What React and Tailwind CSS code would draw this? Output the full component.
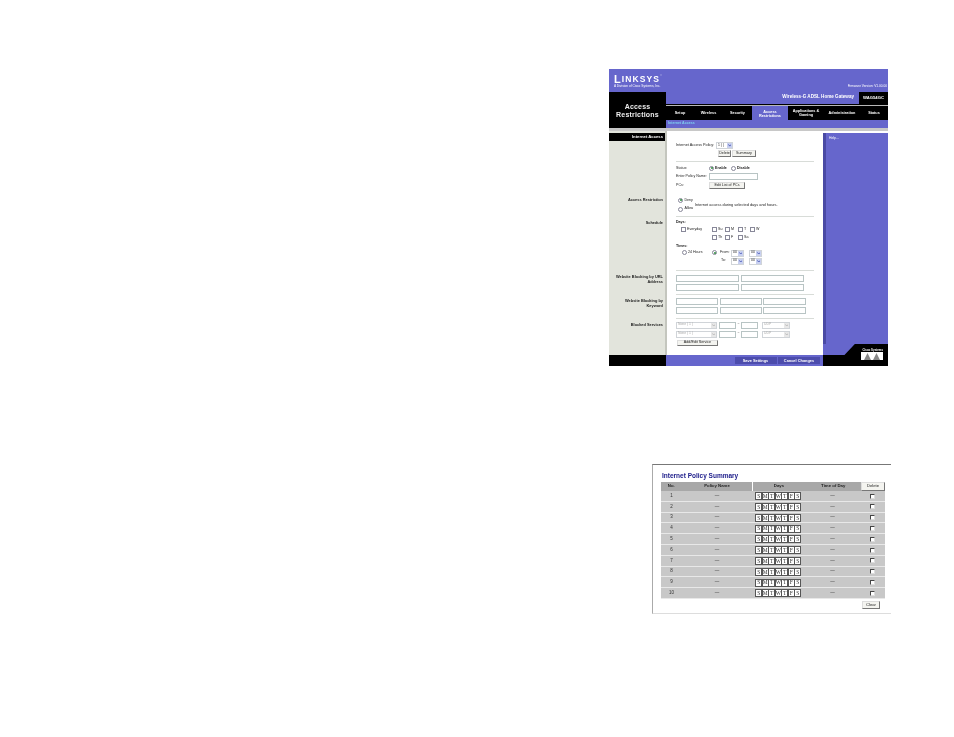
const PURPLE = "bg-[#6666cc]";

function Radio({ on }) {
  return (
    <span className="inline-flex h-[5px] w-[5px] shrink-0 items-center justify-center rounded-full border-[0.5px] border-[#889] bg-white">
      {on && <span className="h-[2px] w-[2px] rounded-full bg-[#2c8a3c]" />}
    </span>
  );
}

function Check({ className = "border-[#889]" }) {
  return <span className={`inline-block h-[5px] w-[5px] shrink-0 border-[0.5px] bg-white ${className}`} />;
}

function Select({ w, value, off }) {
  return (
    <span
      style={{ width: w }}
      className={`flex h-[7px] shrink-0 items-center justify-between border-[0.5px] border-[#d0d4d8] bg-white pl-[1px] text-[3.4px] ${off ? "text-[#aaa]" : "text-[#222]"}`}
    >
      {value}
      <span className={`flex h-full w-[5px] items-center justify-center ${off ? "bg-[#e8e8e8]" : "bg-[#c8d0f0]"}`}>
        <svg viewBox="0 0 6 4" className="h-[2.5px] w-[3.5px]">
          <path d="M0.5 0.5 L3 3.5 L5.5 0.5" fill="none" stroke={off ? "#aaa" : "#2838a8"} strokeWidth="1.2" />
        </svg>
      </span>
    </span>
  );
}

function Input({ w, h = 7 }) {
  return <span style={{ width: w, height: h }} className="block shrink-0 border-[0.5px] border-[#b8c4c4] bg-white" />;
}

function Btn({ w, h = 7, children }) {
  return (
    <span
      style={{ width: w, height: h }}
      className="flex shrink-0 items-center justify-center border-[0.5px] border-b-[#777] border-l-[#ddd] border-r-[#777] border-t-[#ddd] bg-[#f4f4f0] text-[3.7px] text-[#222]"
    >
      {children}
    </span>
  );
}

function Section({ label, black, h, last, children }) {
  return (
    <div style={{ height: h }} className="flex">
      <div className="w-[56px] shrink-0 bg-[#e2e4dc] pt-[2px]">
        {black ? (
          <div className="flex h-[8px] items-center justify-end bg-black pr-[2px] text-[4.2px] font-bold text-white">{label}</div>
        ) : (
          <div className="pr-[2px] pt-[1px] text-right text-[3.9px] font-bold leading-[5.5px] text-[#222]">{label}</div>
        )}
      </div>
      <div className="w-[2px] shrink-0 bg-[#c4c6be]" />
      <div className="w-[156px] shrink-0 bg-white px-[9px]">
        <div className={`h-full ${last ? "" : "border-b-[0.5px] border-[#d8dcd8]"}`}>{children}</div>
      </div>
    </div>
  );
}

function Tab({ w, on, children }) {
  return (
    <div
      style={{ width: w }}
      className={`flex items-center justify-center text-center text-[3.8px] font-bold leading-[4.5px] text-white ${on ? "h-[16px] bg-[#6666cc]" : "h-[14px] bg-black"}`}
    >
      {children}
    </div>
  );
}

function RouterFigure() {
  return (
    <div className="h-[297px] w-[279px] bg-white blur-[0.4px]">
      <div className={`flex h-[23px] ${PURPLE} pl-[5px] text-white`}>
        <div className="pt-[5px]">
          <div className="flex h-[10px] items-end whitespace-nowrap font-bold leading-[9px] tracking-[1.1px]">
            <span className="text-[11px]">L</span>
            <span className="text-[8.5px]">INKSYS</span>
            <span className="mb-[4px] text-[2.5px] font-normal">®</span>
          </div>
          <div className="text-[3.2px] leading-[4px]">A Division of Cisco Systems, Inc.</div>
        </div>
        <div className="ml-auto self-end pb-[3px] pr-[1px] text-[3.2px]">Firmware Version: V1.00.00</div>
      </div>

      <div className="flex h-[36px] bg-black">
        <div className="flex w-[57px] shrink-0 items-center justify-center pt-[2px] text-center text-[7px] font-bold leading-[8.5px] tracking-[0.2px] text-[#eee]">
          Access Restrictions
        </div>
        <div className="w-[222px]">
          <div className={`flex h-[11.5px] items-center justify-end ${PURPLE}`}>
            <span className="pr-[5px] text-[4.6px] font-bold text-white">Wireless-G ADSL Home Gateway</span>
            <span className="flex h-full w-[29px] items-center justify-center bg-black text-[4.2px] font-bold text-white">WAG54GC</span>
          </div>
          <div className="mt-[1.5px] h-[1px] bg-[#b8b8b8]" />
          <div className="flex h-[14px] items-start">
            <Tab w={28}>Setup</Tab>
            <Tab w={29}>Wireless</Tab>
            <Tab w={29}>Security</Tab>
            <Tab w={36} on>Access<br />Restrictions</Tab>
            <Tab w={36}>Applications &amp;<br />Gaming</Tab>
            <Tab w={36}>Administration</Tab>
            <Tab w={28}>Status</Tab>
          </div>
          <div className={`flex h-[8px] items-center ${PURPLE} pl-[2px] text-[3.6px] font-bold text-[#7fd0f0]`}>Internet Access</div>
        </div>
      </div>
      <div className="h-[3px] bg-[#c8c8c8]" />

      <div className="flex h-[235px]">
        <div className="w-[214px] shrink-0">
          <Section label="Internet Access" black h={62.5}>
            <div className="mt-[11px] flex h-[7px] items-center text-[3.8px] text-[#222]">
              <span className="w-[40px] whitespace-nowrap">Internet Access Policy:</span>
              <Select w={17} value="1 ( )" />
            </div>
            <div className="ml-[42px] mt-[1px] flex gap-[1px]">
              <Btn w={13}>Delete</Btn>
              <Btn w={24}>Summary</Btn>
            </div>
            <div className="mt-[4px] border-t-[0.5px] border-[#d8dcd8]" />
            <div className="mt-[3px] flex h-[6px] items-center text-[3.6px] text-[#222]">
              <span className="w-[33px] pt-[1px]">Status:</span>
              <Radio on />
              <span className="ml-[1px] w-[16px] pt-[1px] font-bold">Enable</span>
              <Radio />
              <span className="ml-[1px] pt-[1px] font-bold">Disable</span>
            </div>
            <div className="mt-[2px] flex h-[7px] items-center text-[3.6px] text-[#222]">
              <span className="w-[33px] whitespace-nowrap">Enter Policy Name:</span>
              <Input w={49} />
            </div>
            <div className="mt-[2px] flex h-[7px] items-center text-[3.6px] text-[#222]">
              <span className="w-[33px]">PCs:</span>
              <Btn w={36}>Edit List of PCs</Btn>
            </div>
          </Section>
          <Section label="Access Restriction" h={23}>
            <div className="ml-[2px] pt-[4px] text-[3.6px] text-[#222]">
              <div className="flex h-[5px] items-center gap-[1.5px]"><Radio on /> <span className="pt-[1px]">Deny</span></div>
              <div className="flex h-[4px] items-center whitespace-nowrap pl-[17px] text-[3.9px]">Internet access during selected days and hours.</div>
              <div className="flex h-[5px] items-center gap-[1.5px]"><Radio /> Allow</div>
            </div>
          </Section>
          <Section label="Schedule" h={54}>
            <div className="pt-[3px] text-[3.6px] text-[#222]">
              <div className="h-[5px] font-bold leading-[5px]">Days:</div>
              <div className="mt-[2px] flex h-[7px] items-center">
                <div className="ml-[5px] flex w-[31px] items-center gap-[1px]"><Check /> Everyday</div>
                <div className="flex w-[13px] items-center gap-[1px]"><Check /> Su</div>
                <div className="flex w-[13px] items-center gap-[1px]"><Check /> M</div>
                <div className="flex w-[12px] items-center gap-[1px]"><Check /> T</div>
                <div className="flex items-center gap-[1px]"><Check /> W</div>
              </div>
              <div className="mt-[1px] flex h-[7px] items-center pl-[36px]">
                <div className="flex w-[13px] items-center gap-[1px]"><Check /> Th</div>
                <div className="flex w-[13px] items-center gap-[1px]"><Check /> F</div>
                <div className="flex items-center gap-[1px]"><Check /> Sa</div>
              </div>
              <div className="mt-[2px] h-[5px] font-bold leading-[5px]">Times:</div>
              <div className="mt-[1px] flex h-[7px] items-center">
                <div className="ml-[6px] flex w-[30px] items-center gap-[1px]"><Radio /> 24 Hours</div>
                <div className="flex w-[19px] items-center gap-[3px]"><Radio on /> From:</div>
                <Select w={13} value="00" />
                <span className="w-[5px]" />
                <Select w={13} value="00" />
              </div>
              <div className="mt-[1px] flex h-[7px] items-center pl-[45px]">
                <span className="w-[10px]">To:</span>
                <Select w={13} value="00" />
                <span className="w-[5px]" />
                <Select w={13} value="00" />
              </div>
            </div>
          </Section>
          <Section label={<>Website Blocking by URL<br />Address</>} h={24}>
            <div className="pt-[4px]">
              <div className="flex gap-[2px]"><Input w={63} /><Input w={63} /></div>
              <div className="mt-[2px] flex gap-[2px]"><Input w={63} /><Input w={63} /></div>
            </div>
          </Section>
          <Section label={<>Website Blocking by<br />Keyword</>} h={24}>
            <div className="pt-[3px]">
              <div className="flex gap-[1.5px]"><Input w={42} /><Input w={42} /><Input w={43} /></div>
              <div className="mt-[2px] flex gap-[1.5px]"><Input w={42} /><Input w={42} /><Input w={43} /></div>
            </div>
          </Section>
          <Section label="Blocked Services" h={36.5} last>
            <div className="pt-[3px] text-[3.4px] text-[#aaa]">
              <div className="flex h-[7px] items-center">
                <Select w={41} value="None ( 1 )" off />
                <span className="w-[2px]" />
                <Input w={17} />
                <span className="w-[5px] text-center text-[#333]">~</span>
                <Input w={17} />
                <span className="w-[4px]" />
                <Select w={28} value="UDP" off />
              </div>
              <div className="mt-[2px] flex h-[7px] items-center">
                <Select w={41} value="None ( 1 )" off />
                <span className="w-[2px]" />
                <Input w={17} />
                <span className="w-[5px] text-center text-[#333]">~</span>
                <Input w={17} />
                <span className="w-[4px]" />
                <Select w={28} value="UDP" off />
              </div>
              <div className="ml-[1px] mt-[2px]"><Btn w={41} h={6.5}>Add/Edit Service</Btn></div>
            </div>
          </Section>
          <div className="flex h-[11px]">
            <div className="w-[57px] bg-black" />
            <div className={`flex flex-1 items-center justify-end gap-[1.5px] ${PURPLE} pr-[3px]`}>
              <span className="flex h-[6.5px] w-[42px] items-center justify-center bg-[#4c4cac] text-[3.9px] font-bold text-white">Save Settings</span>
              <span className="flex h-[6.5px] w-[42px] items-center justify-center bg-[#4c4cac] text-[3.9px] font-bold text-white">Cancel Changes</span>
            </div>
          </div>
        </div>
        <div className="flex w-[65px] flex-col bg-white pt-[2px]">
          <div className="flex-1 border-l-[3px] border-[#4a4aa4] bg-[#6666cc] pl-[3px] pt-[3px] text-[3.4px] text-white">Help...</div>
          <div className="bg-[#6666cc]">
            <div className="flex h-[22px] flex-col items-end justify-start bg-black pr-[5px] pt-[3.5px] text-white [clip-path:polygon(49%_0,100%_0,100%_100%,0_100%,0_50%,33%_50%)]">
              <div className="text-[2.9px] font-bold leading-[4px]">Cisco Systems</div>
              <svg viewBox="0 0 22 8" className="h-[8px] w-[22px]">
                <rect width="22" height="8" fill="#fff" />
                <path d="M3 8 L6.5 1 L10 8 Z M12 8 L15.5 1 L19 8 Z" fill="#888" />
              </svg>
            </div>
          </div>
        </div>
      </div>
    </div>
  );
}

const days = ["S", "M", "T", "W", "T", "F", "S"];

function SummaryRow({ n }) {
  return (
    <div className="flex h-[10.8px] items-center border-b-[1px] border-[#e8e8e8] bg-[#c8c8c8] pt-[0.5px] text-[4.5px] text-[#333]">
      <div className="w-[21px] text-center">{n}</div>
      <div className="w-[70px] text-center">—</div>
      <div className="flex w-[53px] justify-center">
        {days.map((d, i) => (
          <span key={i} className="-ml-[0.5px] flex h-[8px] w-[7px] items-center justify-center border-[0.6px] border-[#555] bg-white font-['Liberation_Serif',serif] text-[5.5px] text-[#333]">
            {d}
          </span>
        ))}
      </div>
      <div className="w-[55px] text-center">—</div>
      <div className="flex w-[25px] justify-center"><Check className="border-b-[#ddd] border-l-[#444] border-r-[#ddd] border-t-[#444]" /></div>
    </div>
  );
}

function SummaryFigure() {
  return (
    <div className="h-[150px] w-[239px] border-b-[1px] border-l-[1px] border-t-[1px] border-b-[#ddd] border-l-[#aaa] border-t-[#777] bg-white pl-[8px] pt-[6px] blur-[0.4px]">
      <div className="ml-[1px] h-[11px] text-[6.5px] font-bold leading-[9px] text-[#20208c]">Internet Policy Summary</div>
      <div className="w-[224px]">
        <div className="flex h-[9px] items-center gap-[0.5px] text-center text-[4.3px] font-bold text-[#222]">
          <div className="flex h-full w-[20.5px] items-center justify-center bg-[#a8a8a8]">No.</div>
          <div className="flex h-full w-[70px] items-center justify-center bg-[#a8a8a8]">Policy Name</div>
          <div className="flex h-full w-[53px] items-center justify-center bg-[#a8a8a8]">Days</div>
          <div className="flex h-full w-[54.5px] items-center justify-center bg-[#a8a8a8]">Time of Day</div>
          <Btn w={24} h={9}><span className="text-[4.2px] font-normal">Delete</span></Btn>
        </div>
        {Array.from({ length: 10 }, (_, i) => <SummaryRow key={i} n={i + 1} />)}
        <div className="mt-[2px] flex justify-end pr-[5px]">
          <Btn w={18} h={8}><span className="text-[4.2px]">Clear</span></Btn>
        </div>
      </div>
    </div>
  );
}

export default function App() {
  return (
    <div className="h-[737px] w-[954px] overflow-hidden bg-white [font-family:'Liberation_Sans',sans-serif]">
      <div className="ml-[609px] pt-[69px]"><RouterFigure /></div>
      <div className="ml-[652px] mt-[98px]"><SummaryFigure /></div>
    </div>
  );
}
